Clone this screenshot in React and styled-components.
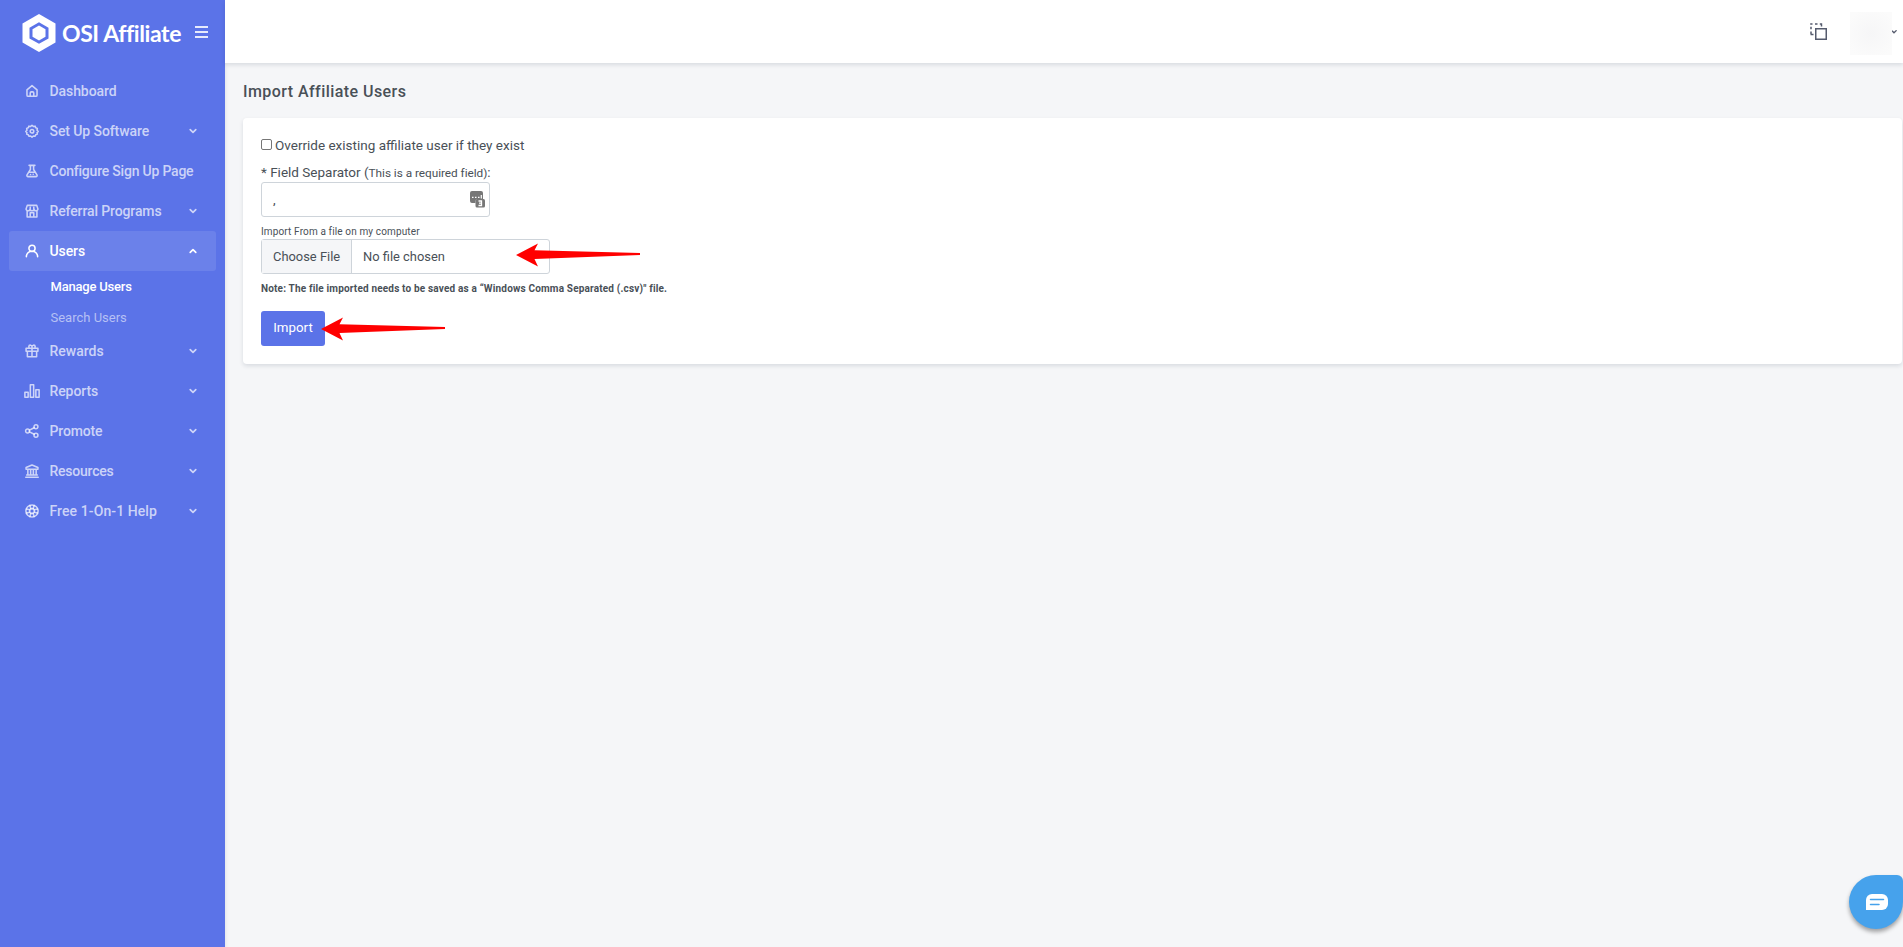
import React from 'react';
import styled, { createGlobalStyle, ThemeProvider } from 'styled-components';

/* ==================================================
 *  Styles
================================================== */
const theme = {
  primary: '#5b73e8',
  text: '#495057',
  border: '#ced4da',
  page: '#f5f6f8',
  chat: '#46a2ec',
  menu: 'rgba(255, 255, 255, 0.7)',
  subMenu: 'rgba(255, 255, 255, 0.56)',
};

const GlobalStyle = createGlobalStyle`
  * {
    box-sizing: border-box;
  }
  body {
    margin: 0;
    overflow: hidden;
    background: ${theme.page};
    color: ${theme.text};
    font: 400 13.5px/20px Roboto, "Liberation Sans", sans-serif;
  }
`;

const Layout = styled.div`
  display: flex;
  height: 100vh;
`;

const Sidebar = styled.aside`
  flex: none;
  width: 225px;
  background: ${props => props.theme.primary};
  box-shadow: 0 2px 4px rgba(15, 34, 58, 0.12);
`;

const Brand = styled.div`
  display: flex;
  align-items: center;
  height: 65px;
  padding-left: 22px;
  color: white;
`;

const BrandName = styled.span`
  margin-left: 6px;
  width: 133px;
  font: 700 23px/30px Lato, sans-serif;
  letter-spacing: -0.42px;
  white-space: nowrap;
`;

const MenuToggle = styled.button`
  display: flex;
  flex-direction: column;
  gap: 3px;
  width: 13px;
  margin-bottom: 1px;
  padding: 0;
  border: 0;
  background: none;
`;

const ToggleBar = styled.span`
  width: 13px;
  height: 2px;
  background: rgba(255, 255, 255, 0.85);
`;

const Menu = styled.nav`
  padding: 6px 9px 0;
`;

const MenuItem = styled.a`
  display: flex;
  align-items: center;
  height: 40px;
  padding: 0 15px;
  border-radius: 3px;
  font-size: 14px;
  font-weight: 500;
  letter-spacing: ${props => props.$track || 0}px;
  color: ${props => (props.$active ? 'white' : props.theme.menu)};
  background: ${props => (props.$active ? 'rgba(255, 255, 255, 0.1)' : 'transparent')};
`;

const MenuLabel = styled.span`
  flex: 1;
  margin: 0 0 1px 9.5px;
  white-space: nowrap;
`;

const Chevron = styled.svg`
  width: 16px;
  height: 16px;
  transform: ${props => (props.$up ? 'rotate(180deg)' : 'none')};
`;

const SubMenu = styled.div`
  height: 60px;
  padding-left: 41.5px;
`;

const SubItem = styled.a`
  display: block;
  height: 31px;
  font-size: 13px;
  line-height: 31px;
  font-weight: ${props => (props.$active ? 500 : 400)};
  letter-spacing: ${props => props.$track || 0}px;
  color: ${props => (props.$active ? 'white' : props.theme.subMenu)};
`;

const Main = styled.main`
  flex: 1;
  min-width: 0;
`;

const Topbar = styled.header`
  display: flex;
  align-items: center;
  justify-content: flex-end;
  height: 63px;
  background: white;
  box-shadow: 0 2px 4px rgba(15, 34, 58, 0.12);
`;

const Avatar = styled.div`
  width: 42px;
  height: 43px;
  margin: 4px 0 0 23px;
  background: radial-gradient(circle, #f6f6f7 0%, #fbfbfb 85%);
`;

const AvatarCaret = styled.svg`
  width: 5px;
  height: 4px;
  margin-right: 6px;
`;

const Content = styled.section`
  padding: 19px 1px 0 18px;
`;

const Title = styled.h4`
  margin: 0 0 16px;
  font-size: 16px;
  line-height: 20px;
  font-weight: 500;
  letter-spacing: 0.44px;
`;

const Card = styled.form`
  height: 246px;
  padding: 17px 18px;
  border-radius: 4px;
  background: white;
  box-shadow: 0 2px 4px rgba(15, 34, 58, 0.12);
`;

const CheckLabel = styled.label`
  display: flex;
  align-items: center;
  height: 20px;
`;

const Checkbox = styled.input`
  appearance: none;
  width: 11px;
  height: 11px;
  margin: -2px 3px 0 0;
  border: 1px solid #767676;
  border-radius: 2px;
  background: white;
`;

const FieldLabel = styled.div`
  height: 20px;
  margin-top: 7px;
  white-space: nowrap;
`;

const Hint = styled.span`
  font-size: 11.8px;
  letter-spacing: -0.03px;
`;

const SeparatorField = styled.div`
  display: flex;
  align-items: center;
  justify-content: space-between;
  width: 229px;
  height: 35px;
  padding: 0 3px 0 11px;
  border: 1px solid ${props => props.theme.border};
  border-radius: 3px;
`;

const SeparatorValue = styled.span`
  margin-bottom: 2px;
`;

const SmallLabel = styled.div`
  height: 14px;
  margin: 8px 0 0;
  font-size: 10px;
  line-height: 14px;
  letter-spacing: 0.13px;
`;

const FileField = styled.div`
  display: flex;
  width: 289px;
  height: 35px;
  line-height: 33px;
  border: 1px solid ${props => props.theme.border};
  border-radius: 3px;
  font-size: 12.9px;
`;

const FileButton = styled.span`
  width: 90px;
  padding-left: 11px;
  border-right: 1px solid ${props => props.theme.border};
  background: ${props => props.theme.page};
`;

const FileName = styled.span`
  padding-left: 11px;
`;

const Note = styled.div`
  height: 14px;
  margin-top: 8px;
  font-size: 10px;
  line-height: 14px;
  font-weight: 700;
  letter-spacing: 0.17px;
  white-space: nowrap;
`;

const ImportButton = styled.button`
  width: 64px;
  height: 35px;
  margin-top: 15px;
  padding: 0 0 2px;
  border: 0;
  border-radius: 3px;
  background: ${props => props.theme.primary};
  color: white;
  font: inherit;
  font-size: 13.3px;
`;

// Pointers lie over the page, on top of the control they mark
const Pointer = styled.svg`
  position: absolute;
  left: ${props => props.$x}px;
  top: ${props => props.$y}px;
  width: 124px;
  height: 24px;
`;

const ChatBubble = styled.button`
  position: absolute;
  right: 0;
  bottom: 18px;
  display: flex;
  align-items: center;
  justify-content: center;
  width: 54px;
  height: 54px;
  padding: 0 0 0 1px;
  border: 0;
  border-radius: 27px 6px 27px 27px;
  background: ${props => props.theme.chat};
  box-shadow: 0 3px 4px rgba(0, 0, 0, 0.35);
`;

/* ==================================================
 *  Helpers
================================================== */
const icons = {
  home: <path d="M3.500 10 12 3l8.500 7v9a2 2 0 0 1-2 2h-13a2 2 0 0 1-2-2zM9 21v-5.500a2 2 0 0 1 2-2h2a2 2 0 0 1 2 2V21" />,
  gear: (
    <>
      <path d="m9.800 4.300 2.200-2 2.200 2 3-.500 1.100 2.700 2.700 1.100-.500 3 2 2.200-2 2.200.500 2.200-2.700 1.100-1.100 2.700-3-.500-2.200 2-2.200-2-3 .500-1.100-2.700L3 17.200l.500-2.200-2-2.200 2-2.200-.500-3 2.700-1.100 1.100-2.700z" />
      <circle cx="12" cy="12.300" r="3" />
    </>
  ),
  flask: <path d="M7 2.500h10M9.300 3v6.500L3.600 18.500a2 2 0 0 0 1.700 3h13.400a2 2 0 0 0 1.700-3L14.700 9.500V3M8 14h8M9.500 18h.1M14 17.500h.1" />,
  store: <path d="M4 2.500h16l2 6a3.300 3 0 0 1-6.600 0 3.300 3 0 0 1-6.700 0 3.300 3 0 0 1-6.700 0zM3.800 11.500V22h16.500V11.500M9 22v-7h6v7M9 8.500V5.500M15 8.500V5.500" />,
  user: <path d="M2.500 21.500a9.500 9.300 0 0 1 19 0M17.200 7.500a5.200 5.200 0 1 1-10.400 0 5.200 5.200 0 0 1 10.400 0z" />,
  gift: <path d="M2 7.500h20v5H2zM4.200 12.500v9.300h15.600v-9.300M12 7.500v14M12 7.500V5a2.700 2.700 0 1 0-3 2.500M12 7.500V5a2.700 2.700 0 1 1 3 2.500" />,
  chart: <path d="M0 14h5.500v8.500H0zM9.200 1.500h5.600v21H9.200zM18.500 10H24v12.500h-5.500z" />,
  share: (
    <>
      <circle cx="4.500" cy="12" r="3.300" />
      <circle cx="18.700" cy="4.800" r="3.300" />
      <circle cx="18.700" cy="19.200" r="3.300" />
      <path d="m7.700 10.500 8-4M7.700 13.500l8 4" />
    </>
  ),
  bank: <path d="M2 9V6l10-4 10 4v3zM1.500 22.500h21M3 18.800h18M5 9v9.500M9.700 9v9.500M14.300 9v9.500M19 9v9.500" />,
  help: (
    <>
      <circle cx="12" cy="12" r="10.300" />
      <circle cx="12" cy="12" r="4" />
      <path d="m8.500 2.800 1.500 5M15.500 2.800l-1.500 5M8.500 21.200l1.500-5M15.500 21.200l-1.500-5M2.800 8.500l5 1.500M2.800 15.500l5-1.500M21.200 8.500l-5 1.500M21.200 15.500l-5-1.500" />
    </>
  ),
};

function MenuIcon({ name }) {
  return (
    <svg width="16" height="16" viewBox="-1.500 -1.500 27 27" fill="none" stroke="currentColor" strokeWidth="2.600" strokeLinecap="round" strokeLinejoin="round">
      {icons[name]}
    </svg>
  );
}

function Arrow({ x, y }) {
  return (
    <Pointer $x={x} $y={y} viewBox="0 0 124 24">
      <path d="M0 12 22 .5 18.500 7.300 124 10V12L18.500 16 22 23.500z" fill="#f00" />
    </Pointer>
  );
}

const menu = [
  { icon: 'home', label: 'Dashboard', track: -0.08 },
  { icon: 'gear', label: 'Set Up Software', track: -0.09, chevron: true },
  { icon: 'flask', label: 'Configure Sign Up Page', track: -0.21 },
  { icon: 'store', label: 'Referral Programs', track: -0.12, chevron: true },
  {
    icon: 'user',
    label: 'Users',
    track: -0.1,
    chevron: true,
    active: true,
    items: [
      { label: 'Manage Users', track: -0.2, active: true },
      { label: 'Search Users' },
    ],
  },
  { icon: 'gift', label: 'Rewards', chevron: true },
  { icon: 'chart', label: 'Reports', track: -0.1, chevron: true },
  { icon: 'share', label: 'Promote', track: -0.14, chevron: true },
  { icon: 'bank', label: 'Resources', track: -0.23, chevron: true },
  { icon: 'help', label: 'Free 1-On-1 Help', track: 0.09, chevron: true },
];

/* ==================================================
 *  Render
================================================== */
function SideMenu() {
  return (
    <Sidebar>
      <Brand>
        <svg width="34" height="38" viewBox="0 0 34 38">
          <path d="M17 0 33.500 9.500v19L17 38 .5 28.500v-19z" fill="#fff" />
          <path d="m17 8.300 9.500 5.400v10.700L17 29.800l-9.500-5.400V13.700z" fill="#5b73e8" />
          <path d="m17 11.500 6.500 3.800v7.500L17 26.500l-6.500-3.700v-7.500z" fill="#fff" />
        </svg>
        <BrandName>OSI Affiliate</BrandName>
        <MenuToggle>
          <ToggleBar />
          <ToggleBar />
          <ToggleBar />
        </MenuToggle>
      </Brand>
      <Menu>
        {menu.map(entry => (
          <React.Fragment key={entry.label}>
            <MenuItem $active={entry.active} $track={entry.track}>
              <MenuIcon name={entry.icon} />
              <MenuLabel>{entry.label}</MenuLabel>
              {entry.chevron && (
                <Chevron $up={entry.active} viewBox="0 0 24 24">
                  <path d="m7.800 9.900 4.200 4.200 4.200-4.200" fill="none" stroke="currentColor" strokeWidth="2.500" strokeLinecap="round" strokeLinejoin="round" />
                </Chevron>
              )}
            </MenuItem>
            {entry.items && (
              <SubMenu>
                {entry.items.map(sub => (
                  <SubItem key={sub.label} $active={sub.active} $track={sub.track}>
                    {sub.label}
                  </SubItem>
                ))}
              </SubMenu>
            )}
          </React.Fragment>
        ))}
      </Menu>
    </Sidebar>
  );
}

function App() {
  return (
    <ThemeProvider theme={theme}>
      <GlobalStyle />
      <Layout>
        <SideMenu />
        <Main>
          <Topbar>
            <svg width="17" height="17" viewBox="0 0 17 17" fill="none" stroke="#555b6d" strokeWidth="1.500">
              <path d="M5.750 5.750h10.500v10.500H5.750z" />
              <path d="M.2 1h2.300M5 1h2.500M9.800 1h2.400M1 3.800v2.500M1 8.500v2.500M11.500 1.800v1.800M.5 11.500h3" />
            </svg>
            <Avatar />
            <AvatarCaret viewBox="0 0 5 4">
              <path d="M0 .8 2 2.800 4.600.3" fill="none" stroke="#555b6d" strokeWidth="1.300" />
            </AvatarCaret>
          </Topbar>
          <Content>
            <Title>Import Affiliate Users</Title>
            <Card>
              <CheckLabel>
                <Checkbox type="checkbox" />
                Override existing affiliate user if they exist
              </CheckLabel>
              <FieldLabel>
                * Field Separator (<Hint>This is a required field)</Hint>:
              </FieldLabel>
              <SeparatorField>
                <SeparatorValue>,</SeparatorValue>
                <svg width="16" height="17" viewBox="0 0 16 17">
                  <path d="M2 0h9a2 2 0 0 1 2 2v6H7.500a2 2 0 0 0-2 2v2H2a2 2 0 0 1-2-2V2a2 2 0 0 1 2-2z" fill="#777" />
                  <path d="M2 6.300h1.500M5 6.300h1.500M8 6.300h1.500M11.300 4v3.500" stroke="#fff" strokeWidth="1.200" />
                  <rect x="5.500" y="8" width="9.500" height="8.500" rx="1.500" fill="#777" />
                  <path d="M8.500 10h3v4.500h-3M9 12.200h2.500" fill="none" stroke="#fff" strokeWidth="1.300" />
                </svg>
              </SeparatorField>
              <SmallLabel>Import From a file on my computer</SmallLabel>
              <FileField>
                <FileButton>Choose File</FileButton>
                <FileName>No file chosen</FileName>
              </FileField>
              <Note>Note: The file imported needs to be saved as a “Windows Comma Separated (.csv)" file.</Note>
              <ImportButton type="button">Import</ImportButton>
            </Card>
          </Content>
        </Main>
      </Layout>
      <Arrow x={516} y={243} />
      <Arrow x={321} y={317} />
      <ChatBubble>
        <svg width="22" height="16" viewBox="0 0 22 16">
          <path d="M6 0h10a6 6 0 0 1 6 6v4a6 6 0 0 1-6 6H0V6a6 6 0 0 1 6-6z" fill="#fff" />
          <path d="M4.500 5.500h13M4.500 10.500h8.500" stroke="#46a2ec" strokeWidth="1.500" strokeLinecap="round" />
        </svg>
      </ChatBubble>
    </ThemeProvider>
  );
}

export default App;
